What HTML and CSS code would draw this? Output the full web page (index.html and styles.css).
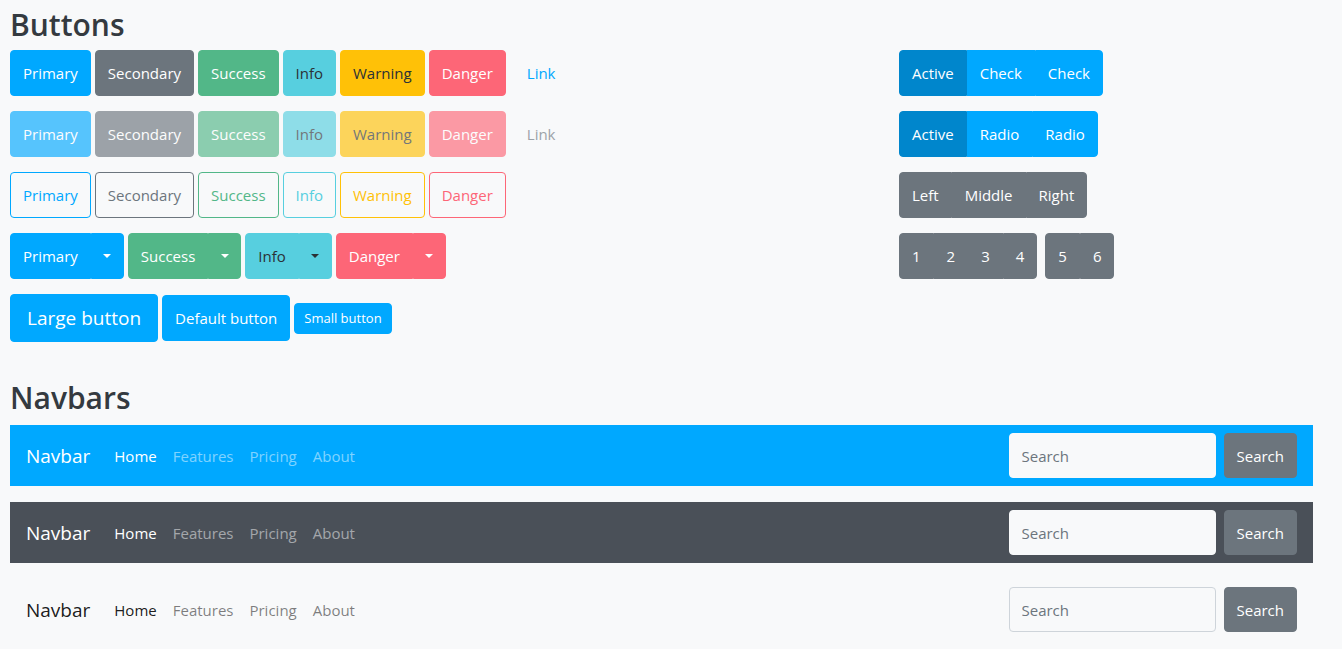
FILE: index.html
```html
<!DOCTYPE html>
<html lang="en">
<head>
  <meta charset="UTF-8">
  <meta name="viewport" content="width=device-width, initial-scale=1.0">
  <title>Theme preview</title>
  <link rel="stylesheet" href="styles.css">
</head>
<body>
  <div class="page">

    <h2 class="section-title">Buttons</h2>

    <div class="buttons-grid">
      <div class="btn-rows">
        <div class="btn-row">
          <button class="btn btn-primary">Primary</button>
          <button class="btn btn-secondary">Secondary</button>
          <button class="btn btn-success">Success</button>
          <button class="btn btn-info">Info</button>
          <button class="btn btn-warning">Warning</button>
          <button class="btn btn-danger">Danger</button>
          <button class="btn btn-link">Link</button>
        </div>

        <div class="btn-row">
          <button class="btn btn-primary" disabled>Primary</button>
          <button class="btn btn-secondary" disabled>Secondary</button>
          <button class="btn btn-success" disabled>Success</button>
          <button class="btn btn-info" disabled>Info</button>
          <button class="btn btn-warning" disabled>Warning</button>
          <button class="btn btn-danger" disabled>Danger</button>
          <button class="btn btn-link" disabled>Link</button>
        </div>

        <div class="btn-row">
          <button class="btn btn-outline-primary">Primary</button>
          <button class="btn btn-outline-secondary">Secondary</button>
          <button class="btn btn-outline-success">Success</button>
          <button class="btn btn-outline-info">Info</button>
          <button class="btn btn-outline-warning">Warning</button>
          <button class="btn btn-outline-danger">Danger</button>
        </div>

        <div class="btn-row">
          <div class="btn-group">
            <button class="btn btn-primary">Primary</button>
            <button class="btn btn-primary split"><span class="caret"></span></button>
          </div>
          <div class="btn-group">
            <button class="btn btn-success">Success</button>
            <button class="btn btn-success split"><span class="caret"></span></button>
          </div>
          <div class="btn-group">
            <button class="btn btn-info">Info</button>
            <button class="btn btn-info split"><span class="caret"></span></button>
          </div>
          <div class="btn-group">
            <button class="btn btn-danger">Danger</button>
            <button class="btn btn-danger split"><span class="caret"></span></button>
          </div>
        </div>

        <div class="btn-row">
          <button class="btn btn-primary btn-lg">Large button</button>
          <button class="btn btn-primary">Default button</button>
          <button class="btn btn-primary btn-sm">Small button</button>
        </div>
      </div>

      <div class="btn-rows">
        <div class="btn-row">
          <div class="btn-group">
            <button class="btn btn-primary active">Active</button>
            <button class="btn btn-primary">Check</button>
            <button class="btn btn-primary">Check</button>
          </div>
        </div>

        <div class="btn-row">
          <div class="btn-group">
            <button class="btn btn-primary active">Active</button>
            <button class="btn btn-primary">Radio</button>
            <button class="btn btn-primary">Radio</button>
          </div>
        </div>

        <div class="btn-row">
          <div class="btn-group">
            <button class="btn btn-secondary">Left</button>
            <button class="btn btn-secondary">Middle</button>
            <button class="btn btn-secondary">Right</button>
          </div>
        </div>

        <div class="btn-row toolbar">
          <div class="btn-group">
            <button class="btn btn-secondary">1</button>
            <button class="btn btn-secondary">2</button>
            <button class="btn btn-secondary">3</button>
            <button class="btn btn-secondary">4</button>
          </div>
          <div class="btn-group">
            <button class="btn btn-secondary">5</button>
            <button class="btn btn-secondary">6</button>
          </div>
        </div>
      </div>
    </div>

    <h2 class="section-title navbars-title">Navbars</h2>

    <nav class="navbar navbar-primary">
      <a class="navbar-brand" href="#">Navbar</a>
      <ul class="nav">
        <li><a class="nav-link active" href="#">Home</a></li>
        <li><a class="nav-link" href="#">Features</a></li>
        <li><a class="nav-link" href="#">Pricing</a></li>
        <li><a class="nav-link" href="#">About</a></li>
      </ul>
      <form class="nav-search">
        <input type="text" class="search-input" placeholder="Search">
        <button type="submit" class="btn btn-secondary">Search</button>
      </form>
    </nav>

    <nav class="navbar navbar-dark">
      <a class="navbar-brand" href="#">Navbar</a>
      <ul class="nav">
        <li><a class="nav-link active" href="#">Home</a></li>
        <li><a class="nav-link" href="#">Features</a></li>
        <li><a class="nav-link" href="#">Pricing</a></li>
        <li><a class="nav-link" href="#">About</a></li>
      </ul>
      <form class="nav-search">
        <input type="text" class="search-input" placeholder="Search">
        <button type="submit" class="btn btn-secondary">Search</button>
      </form>
    </nav>

    <nav class="navbar navbar-light">
      <a class="navbar-brand" href="#">Navbar</a>
      <ul class="nav">
        <li><a class="nav-link active" href="#">Home</a></li>
        <li><a class="nav-link" href="#">Features</a></li>
        <li><a class="nav-link" href="#">Pricing</a></li>
        <li><a class="nav-link" href="#">About</a></li>
      </ul>
      <form class="nav-search">
        <input type="text" class="search-input" placeholder="Search">
        <button type="submit" class="btn btn-secondary">Search</button>
      </form>
    </nav>

  </div>
</body>
</html>
```

FILE: styles.css
```css
body {
  margin: 0;
  font-family: 'Open Sans', 'Liberation Sans', sans-serif;
  background-color: #f8f9fa;
  color: #343a40;
}
.page {
  width: 1303px;
  margin-left: 10px;
}
.section-title {
  font-size: 30px;
  font-weight: 600;
  line-height: 38px;
  margin: 6px 0 6px;
  color: #343a40;
}
.navbars-title {
  margin-top: 37px;
  margin-bottom: 8px;
}

/* buttons */
.buttons-grid {
  display: grid;
  grid-template-columns: 889px auto;
}
.btn-rows {
  display: flex;
  flex-direction: column;
  gap: 15px;
}
.btn-row {
  display: flex;
  align-items: center;
  gap: 4px;
}
.btn-row.toolbar {
  gap: 8px;
}
.btn {
  font-family: inherit;
  font-size: 15px;
  line-height: 24px;
  padding: 10px 12px;
  border: 1px solid transparent;
  border-radius: 4px;
  cursor: pointer;
  color: #fff;
  background: none;
}
.btn:disabled {
  opacity: .65;
  cursor: default;
}
.btn-primary { background-color: #00a8ff; border-color: #00a8ff; }
.btn-secondary { background-color: #6c757d; border-color: #6c757d; }
.btn-success { background-color: #52b788; border-color: #52b788; }
.btn-info { background-color: #57cfdf; border-color: #57cfdf; color: #2b3136; }
.btn-warning { background-color: #ffc107; border-color: #ffc107; color: #2b3136; }
.btn-danger { background-color: #fd6677; border-color: #fd6677; }
.btn-link { color: #00a8ff; padding-left: 16px; }
.btn-link:disabled { color: #6c757d; }
.btn-primary.active { background-color: #0086cc; border-color: #0086cc; }

.btn-outline-primary { color: #00a8ff; border-color: #00a8ff; }
.btn-outline-secondary { color: #6c757d; border-color: #6c757d; }
.btn-outline-success { color: #52b788; border-color: #52b788; }
.btn-outline-info { color: #57cfdf; border-color: #57cfdf; }
.btn-outline-warning { color: #ffc107; border-color: #ffc107; }
.btn-outline-danger { color: #fd6677; border-color: #fd6677; }

.btn-lg {
  font-size: 19px;
  line-height: 30px;
  padding: 8px 16px;
}
.btn-sm {
  font-size: 13px;
  line-height: 21px;
  padding: 4px 9px;
}

.btn-group {
  display: flex;
}
.btn-group .btn {
  border-radius: 0;
  padding-left: 12px;
  padding-right: 12px;
}
.btn-group .btn:first-child {
  border-radius: 4px 0 0 4px;
}
.btn-group .btn:last-child {
  border-radius: 0 4px 4px 0;
}
.btn.split {
  width: 33px;
  padding: 10px 0;
  display: flex;
  align-items: center;
  justify-content: center;
}
.caret {
  display: inline-block;
  width: 0;
  height: 0;
  border-top: 4.5px solid currentColor;
  border-left: 4.5px solid transparent;
  border-right: 4.5px solid transparent;
}

/* navbars */
.navbar {
  display: flex;
  align-items: center;
  height: 61px;
  box-sizing: border-box;
  padding: 8px 16px;
  margin-bottom: 16px;
}
.navbar-primary { background-color: #00a8ff; }
.navbar-dark { background-color: #4a5058; }
.navbar-light { background-color: #f8f9fa; }
.navbar-brand {
  font-size: 19px;
  text-decoration: none;
  margin-right: 16px;
}
.nav {
  display: flex;
  list-style: none;
  margin: 0;
  padding: 0;
  flex: 1;
}
.nav-link {
  display: block;
  padding: 8px;
  font-size: 15px;
  text-decoration: none;
}
.navbar-primary .navbar-brand,
.navbar-primary .nav-link.active,
.navbar-dark .navbar-brand,
.navbar-dark .nav-link.active { color: #fff; }
.navbar-primary .nav-link,
.navbar-dark .nav-link { color: rgba(255, 255, 255, .5); }
.navbar-light .navbar-brand,
.navbar-light .nav-link.active { color: rgba(0, 0, 0, .9); }
.navbar-light .nav-link { color: rgba(0, 0, 0, .5); }

.nav-search {
  display: flex;
  gap: 8px;
  margin: 0;
}
.search-input {
  width: 207px;
  height: 45px;
  box-sizing: border-box;
  padding: 10px 12px;
  font-family: inherit;
  font-size: 15px;
  color: #495057;
  background-color: #f8f9fa;
  border: 1px solid #ced4da;
  border-radius: 4px;
}
.navbar-primary .search-input,
.navbar-dark .search-input { border-color: #f8f9fa; }
.search-input::placeholder {
  color: #6c757d;
}
.nav-search .btn {
  height: 45px;
}
```
